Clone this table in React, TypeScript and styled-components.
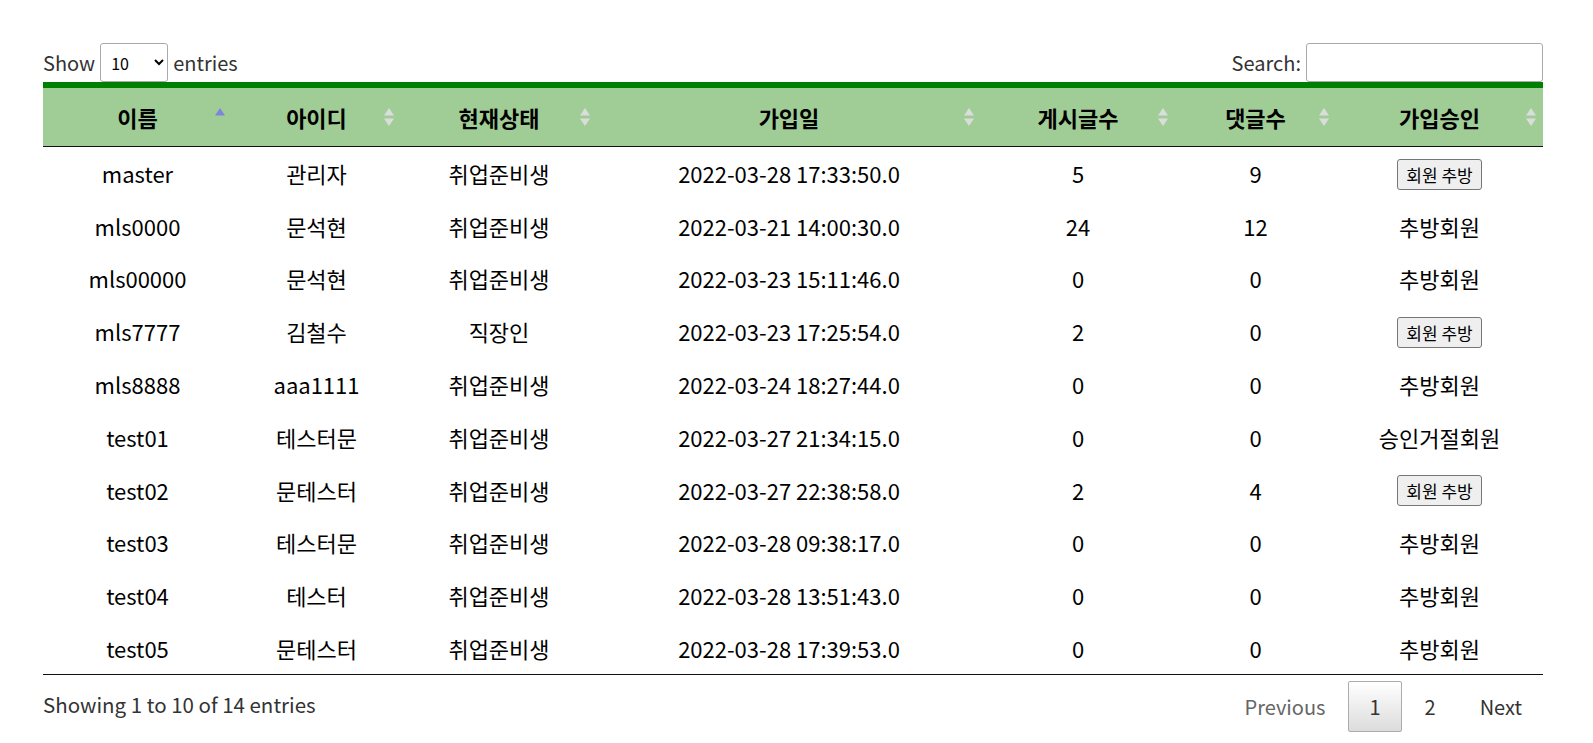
import React from 'react'
import styled, {createGlobalStyle} from 'styled-components'

const GlobalStyle = createGlobalStyle`
  body {
    margin: 0;
    background: #fff;
    font-family: "Noto Sans CJK KR", "Noto Sans", sans-serif;
    font-size: 20px;
    color: #333;
  }
`

type Member = {
    name: string
    nick: string
    status: string
    joined: string
    posts: number
    comments: number
    approval: 'kick' | string
}

const members: Member[] = [
    {name: 'master', nick: '관리자', status: '취업준비생', joined: '2022-03-28 17:33:50.0', posts: 5, comments: 9, approval: 'kick'},
    {name: 'mls0000', nick: '문석현', status: '취업준비생', joined: '2022-03-21 14:00:30.0', posts: 24, comments: 12, approval: '추방회원'},
    {name: 'mls00000', nick: '문석현', status: '취업준비생', joined: '2022-03-23 15:11:46.0', posts: 0, comments: 0, approval: '추방회원'},
    {name: 'mls7777', nick: '김철수', status: '직장인', joined: '2022-03-23 17:25:54.0', posts: 2, comments: 0, approval: 'kick'},
    {name: 'mls8888', nick: 'aaa1111', status: '취업준비생', joined: '2022-03-24 18:27:44.0', posts: 0, comments: 0, approval: '추방회원'},
    {name: 'test01', nick: '테스터문', status: '취업준비생', joined: '2022-03-27 21:34:15.0', posts: 0, comments: 0, approval: '승인거절회원'},
    {name: 'test02', nick: '문테스터', status: '취업준비생', joined: '2022-03-27 22:38:58.0', posts: 2, comments: 4, approval: 'kick'},
    {name: 'test03', nick: '테스터문', status: '취업준비생', joined: '2022-03-28 09:38:17.0', posts: 0, comments: 0, approval: '추방회원'},
    {name: 'test04', nick: '테스터', status: '취업준비생', joined: '2022-03-28 13:51:43.0', posts: 0, comments: 0, approval: '추방회원'},
    {name: 'test05', nick: '문테스터', status: '취업준비생', joined: '2022-03-28 17:39:53.0', posts: 0, comments: 0, approval: '추방회원'},
]

const columns = [
    {label: '이름', width: 189, sort: 'asc'},
    {label: '아이디', width: 169, sort: 'both'},
    {label: '현재상태', width: 196, sort: 'both'},
    {label: '가입일', width: 384, sort: 'both'},
    {label: '게시글수', width: 194, sort: 'both'},
    {label: '댓글수', width: 161, sort: 'both'},
    {label: '가입승인', width: 207, sort: 'both'},
]

const Wrapper = styled.div`
  width: 1500px;
  padding: 43px 0 0 43px;
`

const TopBar = styled.div`
  display: flex;
  justify-content: space-between;
  align-items: center;
  height: 39px;
`

const Control = styled.label`
  display: flex;
  align-items: center;
  gap: 5px;
  color: #333;
`

const LengthSelect = styled.select`
  width: 68px;
  height: 39px;
  border: 1px solid #aaa;
  border-radius: 3px;
  padding: 4px 6px;
  background: #fff;
  font-family: "Noto Sans CJK KR", "Noto Sans", sans-serif;
  font-size: 16px;
  color: #000;
`

const SearchInput = styled.input`
  width: 237px;
  height: 39px;
  box-sizing: border-box;
  border: 1px solid #aaa;
  border-radius: 3px;
  padding: 4px;
  background: #fff;
`

const Table = styled.table`
  width: 100%;
  table-layout: fixed;
  border-collapse: collapse;
  border-bottom: 1px solid #111;
  font-size: 22px;
`

const HeadCell = styled.th`
  position: relative;
  background: #a0cd96;
  border-top: 6px solid #008000;
  border-bottom: 1px solid #111;
  padding: 13px 18px;
  font-weight: bold;
  color: #000;
  text-align: center;
  line-height: 32px;
`

const SortIcon = styled.svg`
  position: absolute;
  right: 7px;
  top: 50%;
  margin-top: -9px;
`

const Row = styled.tr`
  height: 52.8px;
`

const Cell = styled.td`
  padding: 0 10px;
  text-align: center;
  vertical-align: middle;
  color: #000;
  line-height: 32px;
  white-space: nowrap;
`

const KickButton = styled.button`
  font-family: "Noto Sans CJK KR", "Noto Sans", sans-serif;
  font-size: 17px;
  line-height: 23px;
  padding: 3px 8px;
  margin-top: 2.5px;
  color: #000;
  background: #efefef;
  border: 1px solid #767676;
  border-radius: 3px;
  vertical-align: top;
`

const Footer = styled.div`
  display: flex;
  justify-content: space-between;
  align-items: flex-start;
`

const Info = styled.div`
  padding-top: 15px;
  color: #333;
  font-size: 20.5px;
  line-height: 29px;
`

const Paginate = styled.div`
  display: flex;
  padding-top: 6px;
`

const PageButton = styled.span<{ $current?: boolean; $disabled?: boolean }>`
  display: inline-block;
  margin-left: 2px;
  padding: 10px 20px;
  line-height: 29px;
  border: 1px solid ${({$current}) => ($current ? '#acacac' : 'transparent')};
  border-radius: 2px;
  color: ${({$disabled}) => ($disabled ? '#666' : '#333')};
  background: ${({$current}) => ($current ? 'linear-gradient(to bottom, #fff 0%, #dcdcdc 100%)' : 'transparent')};
`

const Sorter = ({sort}: { sort: string }) => (
    <SortIcon width="10" height="18" viewBox="0 0 10 18">
        <polygon points="5,0 10,7.5 0,7.5" fill={sort === 'asc' ? '#7f85dc' : '#dcdcdc'}/>
        {sort === 'both' && <polygon points="0,10.5 10,10.5 5,18" fill="#dcdcdc"/>}
    </SortIcon>
)

const App = () => (
    <>
        <GlobalStyle/>
        <Wrapper>
            <TopBar>
                <Control>
                    Show
                    <LengthSelect defaultValue="10">
                        <option value="10">10</option>
                        <option value="25">25</option>
                        <option value="50">50</option>
                        <option value="100">100</option>
                    </LengthSelect>
                    entries
                </Control>
                <Control>
                    Search:
                    <SearchInput type="search"/>
                </Control>
            </TopBar>
            <Table>
                <colgroup>
                    {columns.map((c) => (
                        <col key={c.label} style={{width: c.width}}/>
                    ))}
                </colgroup>
                <thead>
                    <tr>
                        {columns.map((c) => (
                            <HeadCell key={c.label}>
                                {c.label}
                                <Sorter sort={c.sort}/>
                            </HeadCell>
                        ))}
                    </tr>
                </thead>
                <tbody>
                    {members.map((m) => (
                        <Row key={m.name}>
                            <Cell>{m.name}</Cell>
                            <Cell>{m.nick}</Cell>
                            <Cell>{m.status}</Cell>
                            <Cell>{m.joined}</Cell>
                            <Cell>{m.posts}</Cell>
                            <Cell>{m.comments}</Cell>
                            <Cell>
                                {m.approval === 'kick' ? <KickButton>회원 추방</KickButton> : m.approval}
                            </Cell>
                        </Row>
                    ))}
                </tbody>
            </Table>
            <Footer>
                <Info>Showing 1 to 10 of 14 entries</Info>
                <Paginate>
                    <PageButton $disabled>Previous</PageButton>
                    <PageButton $current>1</PageButton>
                    <PageButton>2</PageButton>
                    <PageButton>Next</PageButton>
                </Paginate>
            </Footer>
        </Wrapper>
    </>
)

export default App
